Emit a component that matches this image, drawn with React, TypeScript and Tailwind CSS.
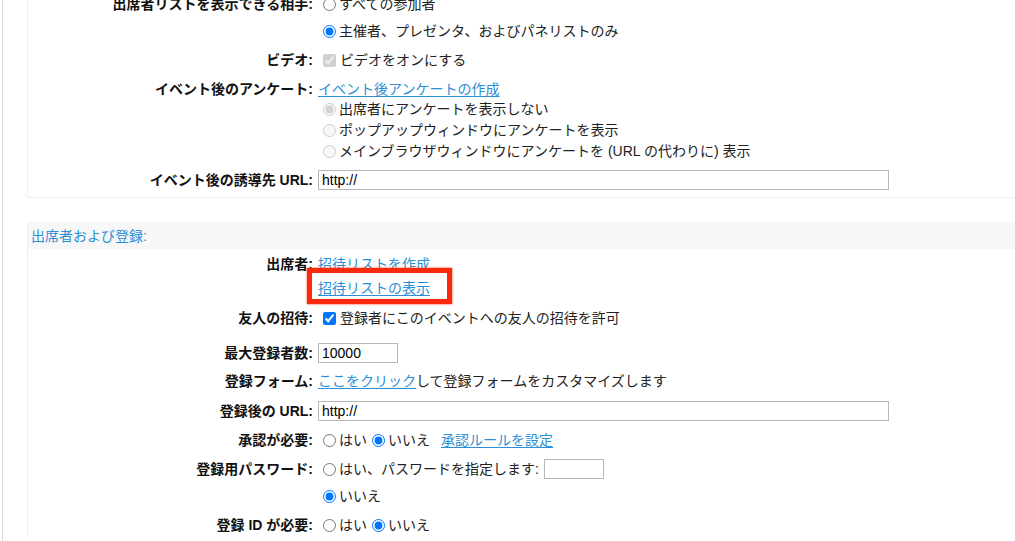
import React from 'react'

const link = 'text-[#2a8fd5] underline underline-offset-[2px]'

function Row({ label, mt, children }: { label?: string; mt: string; children?: React.ReactNode }) {
  return (
    <div className={`flex items-center h-[20px] ${mt}`}>
      <div className="w-[285px] shrink-0 text-right font-bold text-[#111]">{label ? `${label}:` : ''}</div>
      <div className="flex items-center ml-[5px] whitespace-nowrap text-[#222]">{children}</div>
    </div>
  )
}

function Radio({ checked, disabled }: { checked?: boolean; disabled?: boolean }) {
  return (
    <input
      type="radio"
      readOnly
      defaultChecked={checked}
      disabled={disabled}
      className="m-0 ml-[5px] mr-[3px] w-[13px] h-[13px] shrink-0"
    />
  )
}

function Check({ checked, disabled }: { checked?: boolean; disabled?: boolean }) {
  return (
    <input
      type="checkbox"
      readOnly
      defaultChecked={checked}
      disabled={disabled}
      className="m-0 ml-[5px] mr-[4px] w-[13px] h-[13px] shrink-0"
    />
  )
}

function TextBox({ value, w }: { value?: string; w: string }) {
  return (
    <input
      type="text"
      readOnly
      defaultValue={value}
      className={`h-[20px] border border-[#b7b7b7] bg-white px-[3px] text-[14px] text-black ${w}`}
    />
  )
}

export default function App() {
  return (
    <div
      className="w-[1015px] h-[541px] overflow-hidden bg-white flex text-[14px] leading-[20px]"
      style={{ fontFamily: '"Liberation Sans", "Noto Sans CJK JP", sans-serif' }}
    >
      {/* page edge */}
      <div className="w-[1px] ml-[2px] bg-[#dcdcdc] shrink-0" />

      <div className="ml-[24px] flex-1">
        {/* Event options panel */}
        <div className="border-l border-b border-[#efefef] -mt-[12px] pt-[8px] pb-[7px]">
          <Row label="出席者リストを表示できる相手" mt="-mt-[2px]">
            <Radio />すべての参加者
          </Row>
          <Row mt="mt-[7px]">
            <Radio checked />主催者、プレゼンタ、およびパネリストのみ
          </Row>
          <Row label="ビデオ" mt="mt-[9px]">
            <Check checked disabled />ビデオをオンにする
          </Row>
          <Row label="イベント後のアンケート" mt="mt-[9px]">
            <a className={link}>イベント後アンケートの作成</a>
          </Row>
          <Row mt="mt-0">
            <Radio checked disabled />出席者にアンケートを表示しない
          </Row>
          <Row mt="mt-[1px]">
            <Radio disabled />ポップアップウィンドウにアンケートを表示
          </Row>
          <Row mt="mt-[1px]">
            <Radio disabled />メインブラウザウィンドウにアンケートを (URL の代わりに) 表示
          </Row>
          <Row label="イベント後の誘導先 URL" mt="mt-[9px]">
            <TextBox value="http://" w="w-[571px]" />
          </Row>
        </div>

        {/* Attendees and registration */}
        <div className="mt-[24px] border-l border-[#efefef]">
          <div className="h-[27px] bg-[#f7f7f7] pl-[3px] flex items-center text-[#2a8fd5]">出席者および登録:</div>

          <Row label="出席者" mt="mt-[5px]">
            <a className={link}>招待リストを作成</a>
          </Row>
          <Row mt="mt-[4px]">
            <span className="relative">
              <a className={link}>招待リストの表示</a>
              <span className="absolute -left-[11px] -top-[10px] w-[145px] h-[36px] border-[5px] border-[#fb2a0c] shadow-[0_0_2px_#ff3b1a]" />
            </span>
          </Row>
          <Row label="友人の招待" mt="mt-[10px]">
            <Check checked />登録者にこのイベントへの友人の招待を許可
          </Row>
          <Row label="最大登録者数" mt="mt-[15px]">
            <TextBox value="10000" w="w-[80px]" />
          </Row>
          <Row label="登録フォーム" mt="mt-[8px]">
            <a className={link}>ここをクリック</a>して登録フォームをカスタマイズします
          </Row>
          <Row label="登録後の URL" mt="mt-[10px]">
            <TextBox value="http://" w="w-[571px]" />
          </Row>
          <Row label="承認が必要" mt="mt-[9px]">
            <Radio />はい
            <Radio checked />いいえ
            <a className={`${link} ml-[11px]`}>承認ルールを設定</a>
          </Row>
          <Row label="登録用パスワード" mt="mt-[9px]">
            <Radio />はい、パスワードを指定します:
            <span className="ml-[5px] flex">
              <TextBox w="w-[60px]" />
            </span>
          </Row>
          <Row mt="mt-[7px]">
            <Radio checked />いいえ
          </Row>
          <Row label="登録 ID が必要" mt="mt-[9px]">
            <Radio />はい
            <Radio checked />いいえ
          </Row>
        </div>
      </div>
    </div>
  )
}
